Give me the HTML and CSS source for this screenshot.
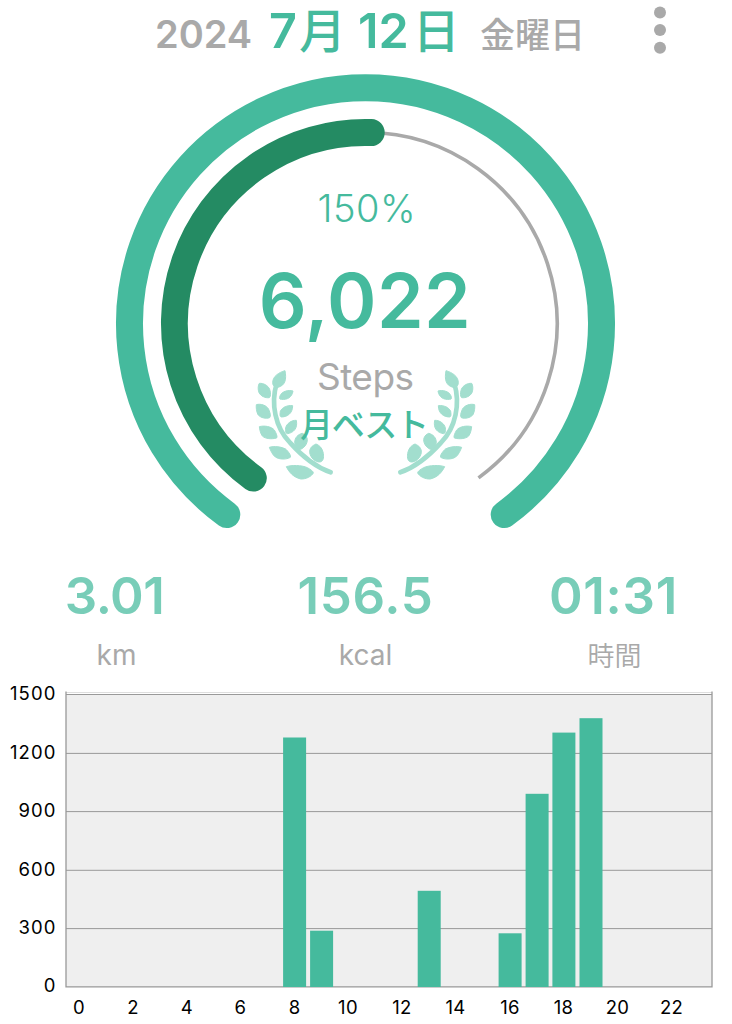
FILE: index.html
```html
<!DOCTYPE html>
<html lang="ja">
<head>
<meta charset="utf-8">
<title>Steps</title>
<link rel="stylesheet" href="styles.css">
</head>
<body>
<main class="app">
  <header class="header">
    <span class="year">2024</span>
    <h1 class="date"><span class="num">7</span><span class="kanji month">月</span><span class="num day">12</span><span class="kanji last">日</span></h1>
    <span class="weekday">金曜日</span>
    <svg class="menu" width="14" height="50" viewBox="0 0 14 50"><circle cx="7" cy="7.6" r="6"/><circle cx="7" cy="25.1" r="6"/><circle cx="7" cy="42.7" r="6"/></svg>
  </header>

  <svg class="gauge" width="732" height="480" viewBox="0 66 732 480">
    <defs>
      <g id="laurel" transform="translate(240 350) scale(.33333)">
        <path class="stem" d="M110 100C92 160 105 232 150 278C184 316 222 350 272 367"/>
        <path d="M135 62C118 67 98 78 98 98C98 108 106 114 114 112C136 106 140 88 135 62Z"/>
        <path d="M58 100C70 99 84 106 89 118C93 130 92 140 88 143C76 145 62 138 57 128C53 118 54 106 58 100Z"/>
        <path d="M159 123C145 119 125 124 120 138C117 146 119 148 124 148C142 150 156 142 159 123Z"/>
        <path d="M49 164C62 160 80 166 86 178C91 190 93 198 89 203C78 207 62 204 54 194C49 184 48 172 49 164Z"/>
        <path d="M158 167C142 165 126 172 121 184C119 196 120 200 124 201C142 201 158 190 158 167Z"/>
        <path d="M58 230C72 226 94 229 103 240C109 250 113 260 110 264C96 268 76 267 67 258C61 250 59 238 58 230Z"/>
        <path d="M169 211C155 210 139 221 137 234C135 246 138 251 143 251C160 248 174 236 169 211Z"/>
        <path d="M88 292C100 288 128 289 140 300C149 310 153 317 151 322C140 329 118 329 106 321C97 314 92 302 88 292Z"/>
        <path d="M187 250C174 253 164 263 164 278C167 290 174 299 182 298C196 292 205 276 201 264C198 256 192 252 187 250Z"/>
        <path d="M228 282C216 287 208 295 209 308C212 324 226 337 240 336C252 334 252 318 249 306C245 292 238 286 228 282Z"/>
        <path d="M139 350C154 345 186 345 202 353C213 359 220 364 220 369C215 379 198 388 182 387C160 381 148 368 139 350Z"/>
      </g>
    </defs>
    <path class="ring-outer" d="M226.8 514.6A236 236 0 1 1 504.2 514.6"/>
    <path class="ring-track" d="M365.5 132.5A191 191 0 0 1 478.5 477.9"/>
    <path class="ring-inner" d="M253.3 478.1A191 191 0 0 1 371.2 132.6"/>
    <use class="laurel" href="#laurel"/>
    <use class="laurel" href="#laurel" transform="translate(731 0) scale(-1 1)"/>
    <text class="percent" x="317.5" y="221.5" textLength="98">150%</text>
    <text class="steps" x="258.8" y="327.5" textLength="212">6,022</text>
    <text class="unit" x="317" y="390" textLength="97">Steps</text>
    <text class="best" x="300" y="437" textLength="129">月ベスト</text>
  </svg>

  <section class="stats">
    <div class="stat"><span class="value">3.01</span><span class="label">km</span></div>
    <div class="stat"><span class="value mid">156.5</span><span class="label">kcal</span></div>
    <div class="stat"><span class="value time">01:31</span><span class="label jp">時間</span></div>
  </section>

  <svg class="chart" width="732" height="344" viewBox="0 680 732 344">
    <rect class="plot" x="66" y="694" width="646" height="293"/>
    <path class="edge" d="M66 692.5H712"/>
    <path class="grid" d="M66 694.5H712M66 753.4H712M66 811.6H712M66 870.3H712M66 928.6H712"/>
    <path class="axis" d="M66 691.5V986.8H712V691.5"/>
    <g class="bars">
      <rect x="283.1" y="737.5" width="23" height="249.5"/>
      <rect x="310.1" y="930.7" width="23" height="56.3"/>
      <rect x="417.7" y="890.8" width="23" height="96.2"/>
      <rect x="498.6" y="933.3" width="23" height="53.7"/>
      <rect x="525.6" y="793.8" width="23" height="193.2"/>
      <rect x="552.4" y="732.6" width="23" height="254.4"/>
      <rect x="579.5" y="718.2" width="23" height="268.8"/>
    </g>
    <g class="ylabels">
      <text x="56.5" y="700.2">1500</text>
      <text x="56.5" y="758.7">1200</text>
      <text x="56.5" y="817.2">900</text>
      <text x="56.5" y="875.7">600</text>
      <text x="56.5" y="933.6">300</text>
      <text x="56.5" y="991.8">0</text>
    </g>
    <g class="xlabels">
      <text x="79" y="1014">0</text>
      <text x="133" y="1014">2</text>
      <text x="187" y="1014">4</text>
      <text x="240.5" y="1014">6</text>
      <text x="294.5" y="1014">8</text>
      <text x="348" y="1014">10</text>
      <text x="402" y="1014">12</text>
      <text x="455.5" y="1014">14</text>
      <text x="510" y="1014">16</text>
      <text x="563.5" y="1014">18</text>
      <text x="617.5" y="1014">20</text>
      <text x="671.5" y="1014">22</text>
    </g>
  </svg>
</main>
</body>
</html>
```
FILE: styles.css
```css
body {
  margin: 0;
  background: #fff;
  font-family: Inter, "Noto Sans CJK JP", sans-serif;
}
.app {
  width: 732px;
  height: 1024px;
  display: flex;
  flex-direction: column;
}
.header {
  height: 66px;
  display: flex;
  align-items: baseline;
  padding-left: 155px;
  box-sizing: border-box;
  white-space: nowrap;
  line-height: 62px;
}
.year {
  width: 114px;
  color: #a9a9a9;
  font-size: 38px;
  font-weight: 600;
}
.date {
  width: 211px;
  margin: 0;
  display: flex;
  align-items: baseline;
  color: #45ba9d;
  font-size: 48.5px;
  font-weight: 600;
}
.kanji {
  font-family: "Noto Sans CJK JP", sans-serif;
  font-size: 47px;
  font-weight: 500;
  line-height: 56px;
}
.month {
  margin-left: 2px;
}
.day {
  margin-left: 12px;
}
.last {
  margin-left: 4px;
}
.weekday {
  width: 173px;
  color: #a9a9a9;
  font-family: "Noto Sans CJK JP", sans-serif;
  font-size: 35px;
  font-weight: 500;
  line-height: 50px;
}
.menu {
  align-self: flex-start;
  margin-top: 5px;
  fill: #a9a9a9;
}
.gauge,
.chart {
  display: block;
  flex: none;
}
.ring-outer,
.ring-inner,
.ring-track {
  fill: none;
  stroke-width: 27;
  stroke-linecap: round;
}
.ring-outer { stroke: #45ba9d; }
.ring-inner { stroke: #248b63; }
.ring-track {
  stroke: #a9a9a9;
  stroke-width: 3.6;
  stroke-linecap: butt;
}
.laurel {
  fill: #a2dece;
  stroke: #a2dece;
  stroke-width: 3;
  stroke-linejoin: round;
}
.stem {
  fill: none;
  stroke-width: 14;
  stroke-linecap: round;
}
.percent {
  fill: #45ba9d;
  font-size: 38px;
  font-weight: 300;
}
.steps {
  fill: #45ba9d;
  font-size: 75px;
  font-weight: 600;
}
.unit {
  fill: #a9a9a9;
  font-size: 37px;
}
.best {
  fill: #45ba9d;
  font-family: "Noto Sans CJK JP", sans-serif;
  font-size: 33px;
  font-weight: 500;
}
.stats {
  height: 134px;
  display: grid;
  grid-template-columns: repeat(3, 249px);
  margin-left: -8px;
}
.stat {
  display: flex;
  flex-direction: column;
  align-items: center;
  padding-top: 20px;
}
.value {
  color: #78cdb8;
  font-size: 51px;
  font-weight: 600;
  line-height: 60px;
  letter-spacing: -.5px;
  margin-left: -4px;
}
.mid,
.time {
  margin-left: 0;
  letter-spacing: .7px;
}
.time {
  margin-left: -2px;
}
.label {
  margin-top: 9px;
  color: #a9a9a9;
  font-size: 28px;
  font-weight: 400;
  line-height: 40px;
}
.jp {
  font-family: "Noto Sans CJK JP", sans-serif;
  font-size: 27px;
  font-weight: 350;
}
.plot { fill: #efefef; }
.edge { stroke: #dedede; stroke-width: 1; }
.grid { stroke: #999; stroke-width: 1; }
.axis { fill: none; stroke: #999; stroke-width: 1.3; }
.bars { fill: #45ba9d; }
.ylabels,
.xlabels {
  fill: #000;
  font-size: 18.5px;
}
.ylabels {
  text-anchor: end;
  letter-spacing: 1.1px;
}
.xlabels {
  text-anchor: middle;
  letter-spacing: .3px;
}
```
